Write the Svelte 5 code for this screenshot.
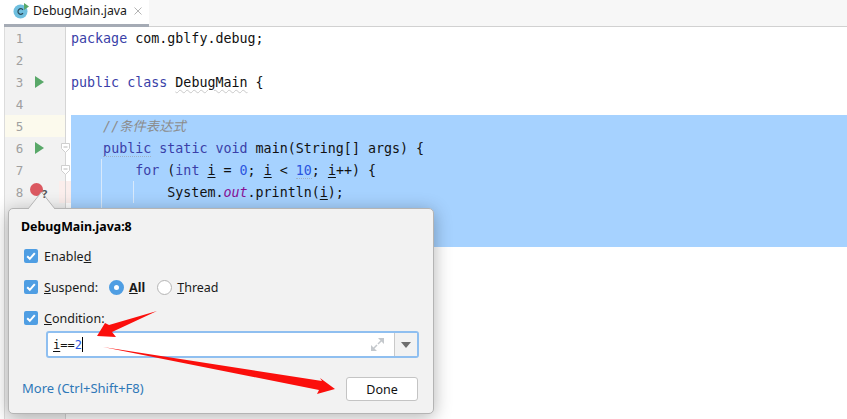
<script lang="ts">
	type Tok = { t: string; c?: string };
	const kw = 'kw';
	const rows: { n: number; toks: Tok[]; sel?: boolean; run?: boolean; fold?: boolean; cur?: boolean; bp?: boolean; guides?: number }[] = [
		{ n: 1, toks: [{ t: 'package', c: kw }, { t: ' com.gblfy.debug;' }] },
		{ n: 2, toks: [] },
		{ n: 3, run: true, toks: [{ t: 'public class', c: kw }, { t: ' ' }, { t: 'DebugMain', c: 'typo' }, { t: ' {' }] },
		{ n: 4, toks: [] },
		{ n: 5, sel: true, cur: true, toks: [{ t: '    ' }, { t: '//条件表达式', c: 'cmt' }] },
		{ n: 6, sel: true, run: true, fold: true, toks: [{ t: '    ' }, { t: 'public', c: 'kw dotted' }, { t: ' static void', c: kw }, { t: ' main(String[] args) {' }] },
		{ n: 7, sel: true, fold: true, guides: 1, toks: [{ t: '        ' }, { t: 'for', c: kw }, { t: ' (' }, { t: 'int', c: kw }, { t: ' ' }, { t: 'i', c: 'uv' }, { t: ' = ' }, { t: '0', c: 'num' }, { t: '; ' }, { t: 'i', c: 'uv' }, { t: ' < ' }, { t: '10', c: 'num dotted' }, { t: '; ' }, { t: 'i', c: 'uv' }, { t: '++) {' }] },
		{ n: 8, sel: true, bp: true, guides: 2, toks: [{ t: '            System.' }, { t: 'out', c: 'fld' }, { t: '.println(' }, { t: 'i', c: 'uv' }, { t: ');' }] },
		{ n: 9, sel: true, guides: 1, toks: [{ t: '        }' }] },
		{ n: 10, sel: true, toks: [{ t: '    }' }] },
		{ n: 11, toks: [{ t: '}' }] }
	];
</script>

<div class="ide">
	<div class="tabbar">
		<div class="tab">
			<svg class="class-icon" width="16" height="16" viewBox="0 0 16 16">
				<circle cx="7.5" cy="8.5" r="7" fill="#6fbfdf" />
				<path d="M10 6.800a2.800 2.800 0 1 0 0 3.400" fill="none" stroke="#2b4a58" stroke-width="1.200" />
				<path d="M11 0l5 3.500-5 3.500z" fill="#59a869" />
			</svg>
			<span class="tab-name">DebugMain.java</span>
			<svg class="tab-close" width="8" height="8" viewBox="0 0 8 8">
				<path d="M.5.5l7 7M7.500.5l-7 7" stroke="#b4b4b4" stroke-width="1" />
			</svg>
		</div>
	</div>

	<div class="editor">
		{#each rows as r}
			<div class="row" class:cur={r.cur} class:bp={r.bp}>
				<div class="gutter">
					<span class="num-col">{r.n}</span>
					<span class="mark-col">
						{#if r.run}
							<svg width="9" height="12" viewBox="0 0 9 12"><path d="M0 0l9 6-9 6z" fill="#59a869" /></svg>
						{/if}
						{#if r.bp}
							<span class="dot"></span>
							<span class="qmark">?</span>
						{/if}
					</span>
					{#if r.fold}
						<svg class="fold" width="9" height="10" viewBox="0 0 9 10">
							<path d="M.5.5h8v5l-4 4-4-4z" fill="#fff" stroke="#cfcfcf" />
							<path d="M2.500 4h4" stroke="#b8b8b8" />
						</svg>
					{/if}
				</div>
				<div class="code" class:sel={r.sel}>
					{#if r.guides}<i class="guide g1"></i>{/if}
					{#if r.guides === 2}<i class="guide g2"></i>{/if}
					<div class="line">{#each r.toks as tk}<span class={tk.c}>{tk.t}</span>{/each}</div>
				</div>
			</div>
		{/each}
		<div class="row filler"><div class="gutter"></div></div>
	</div>

	<div class="popup">
		<svg class="beak" width="27" height="17" viewBox="0 0 27 17">
			<path d="M0 17L13.500 0 27 17z" fill="#f2f2f2" />
			<path d="M0 17L13.500 0 27 17" fill="none" stroke="#b4b4b4" />
		</svg>
		<div class="title">DebugMain.java:8</div>
		<div class="opt first">
			<span class="cb"><svg width="14" height="14" viewBox="0 0 14 14"><path d="M3.200 7.200l2.600 2.600 5-5.600" fill="none" stroke="#fff" stroke-width="2" /></svg></span>
			<span>Enable<u>d</u></span>
		</div>
		<div class="opt">
			<span class="cb"><svg width="14" height="14" viewBox="0 0 14 14"><path d="M3.200 7.200l2.600 2.600 5-5.600" fill="none" stroke="#fff" stroke-width="2" /></svg></span>
			<span><u>S</u>uspend:</span>
			<span class="radio on"></span>
			<b><u>A</u>ll</b>
			<span class="radio"></span>
			<span><u>T</u>hread</span>
		</div>
		<div class="opt">
			<span class="cb"><svg width="14" height="14" viewBox="0 0 14 14"><path d="M3.200 7.200l2.600 2.600 5-5.600" fill="none" stroke="#fff" stroke-width="2" /></svg></span>
			<span><u>C</u>ondition:</span>
		</div>
		<div class="field">
			<div class="field-text"><span class="uv">i</span>==<span class="num">2</span><i class="caret"></i></div>
			<svg class="expand" width="13" height="13" viewBox="0 0 13 13">
				<path d="M7 0h6v6zM0 7v6h6z" fill="#c4c8cc" />
				<path d="M11 2L7 6M2 11l4-4" stroke="#c4c8cc" stroke-width="1.500" />
			</svg>
			<div class="drop"><svg width="10" height="6" viewBox="0 0 10 6"><path d="M0 0h10L5 6z" fill="#6e6e6e" /></svg></div>
		</div>
		<div class="foot">
			<span class="more">More (Ctrl+Shift+F8)</span>
			<span class="done">Done</span>
		</div>
	</div>

	<svg class="arrows" width="847" height="419" viewBox="0 0 847 419">
		<path d="M157 311L109 325 105 323 97 336 116 337 112 332z" fill="#fb0f0c" />
		<path d="M103 347L322 381 320 378 335 389 317 394 319 390z" fill="#fb0f0c" />
	</svg>
</div>

<style>
	:global(body) {
		margin: 0;
		background: #fff;
	}

	.ide {
		position: relative;
		width: 847px;
		height: 419px;
		overflow: hidden;
		font-family: 'Noto Sans', sans-serif;
	}

	.tabbar {
		display: flex;
		height: 26px;
		margin-left: 4px;
		background: #f7f7f7;
		border-bottom: 1px solid #d1d1d1;
	}

	.tab {
		display: flex;
		align-items: center;
		box-sizing: border-box;
		width: 145px;
		height: 27px;
		padding: 0 0 3px 9px;
		background: #fff;
		border-bottom: 3px solid #a5abb5;
	}

	.tab-name {
		margin-left: 4px;
		font-size: 12.3px;
		color: #1a1a1a;
	}

	.tab-close {
		margin-left: 7px;
	}

	.editor {
		font-family: 'DejaVu Sans Mono', 'Noto Sans CJK SC', monospace;
		font-size: 13.33px;
		color: #111;
	}

	.row {
		display: flex;
		height: 22px;
		line-height: 24px;
	}

	.row.filler {
		height: 150px;
	}

	.gutter {
		position: relative;
		display: flex;
		flex: 0 0 62px;
		box-sizing: border-box;
		margin-left: 4px;
		background: #f2f2f2;
		border-left: 1px solid #dcdcdc;
		border-right: 1px solid #d5d5d5;
		color: #a0a0a0;
		font-size: 12.5px;
	}

	.row.cur .gutter {
		background: #fcfaed;
	}

	.row.bp .gutter {
		background: linear-gradient(90deg, #f2f2f2 54px, #fbeeec 54px);
	}

	.num-col {
		width: 29px;
		text-align: center;
	}

	.mark-col {
		position: relative;
		display: flex;
		align-items: center;
		padding-left: 1px;
		height: 22px;
	}

	.fold {
		position: absolute;
		right: -5px;
		top: 6px;
	}

	.dot {
		position: absolute;
		left: -4px;
		top: 2px;
		width: 13px;
		height: 13px;
		border-radius: 50%;
		background: #db5860;
	}

	.qmark {
		position: absolute;
		z-index: 1;
		left: 8px;
		top: 2px;
		font: bold 11px/22px 'Noto Sans', sans-serif;
		color: #555;
	}

	.code {
		position: relative;
		flex: 1;
		margin-left: 5px;
	}

	.row.bp .code {
		box-shadow: -5px 0 0 #fbeeec;
	}

	.code.sel {
		background: #a6d2ff;
	}

	.line {
		position: relative;
		height: 22px;
		white-space: pre;
	}

	.guide {
		position: absolute;
		top: 0;
		bottom: 0;
		width: 1px;
		background: #d8e9fb;
	}

	.g1 { left: 30px; }
	.g2 { left: 62px; }

	.kw { color: #3a3fa8; }
	.num { color: #2a55e0; }
	.cmt { color: #8c8c8c; font-style: italic; }
	.fld { color: #871094; font-style: italic; }
	.uv { text-decoration: underline; text-underline-offset: 2px; }
	.dotted { border-bottom: 1px dotted #9fb0c4; }
	.typo { text-decoration: underline wavy #c9c9c9 1px; text-underline-offset: 2px; }

	.popup {
		position: absolute;
		left: 8px;
		top: 208px;
		box-sizing: border-box;
		width: 426px;
		height: 206px;
		padding: 10px 15px 0 12px;
		background: #f2f2f2;
		border: 1px solid #b4b4b4;
		border-radius: 5px;
		box-shadow: 0 3px 18px rgba(0, 0, 0, 0.3);
		font-size: 12.5px;
		color: #1a1a1a;
	}

	.beak {
		position: absolute;
		left: 19px;
		top: -17px;
	}

	.title {
		height: 16px;
		line-height: 16px;
		font-size: 12.4px;
		font-weight: 700;
		color: #000;
	}

	.opt {
		display: flex;
		align-items: center;
		height: 16px;
		margin-top: 15px;
		margin-left: 3px;
	}

	.opt.first { margin-top: 13px; }

	.cb {
		display: flex;
		width: 14px;
		height: 14px;
		margin-right: 6px;
		border-radius: 2px;
		background: #4f9ee3;
	}

	.radio {
		box-sizing: border-box;
		width: 15px;
		height: 15px;
		margin: 0 5px 0 12px;
		border: 1px solid #b5b5b5;
		border-radius: 50%;
		background: #fff;
	}

	.radio.on {
		border: 5px solid #4f9ee3;
		margin-left: 11px;
	}

	.field {
		display: flex;
		align-items: center;
		box-sizing: border-box;
		width: 373px;
		height: 27px;
		margin: 5px 0 0 25px;
		border: 2px solid #8fbff0;
		border-radius: 3px;
		background: #fff;
	}

	.field-text {
		flex: 1;
		padding-left: 5px;
		font-family: 'DejaVu Sans Mono', monospace;
		font-size: 12px;
		color: #111;
	}

	.caret {
		display: inline-block;
		width: 1px;
		height: 15px;
		margin-bottom: -3px;
		background: #000;
	}

	.expand { margin-right: 10px; }

	.drop {
		display: flex;
		align-items: center;
		justify-content: center;
		width: 22px;
		height: 100%;
		background: #f2f2f2;
		border-left: 1px solid #c9c9c9;
	}

	.foot {
		display: flex;
		align-items: center;
		justify-content: space-between;
		margin: 19px 0 0 1px;
	}

	.more {
		margin-bottom: 2px;
		color: #2f78b8;
		font-size: 13px;
	}

	.done {
		box-sizing: border-box;
		width: 72px;
		height: 24px;
		line-height: 24px;
		text-align: center;
		background: #fff;
		border: 1px solid #c4c4c4;
		border-radius: 3px;
		color: #111;
	}

	.arrows {
		position: absolute;
		left: 0;
		top: 0;
		pointer-events: none;
	}
</style>
